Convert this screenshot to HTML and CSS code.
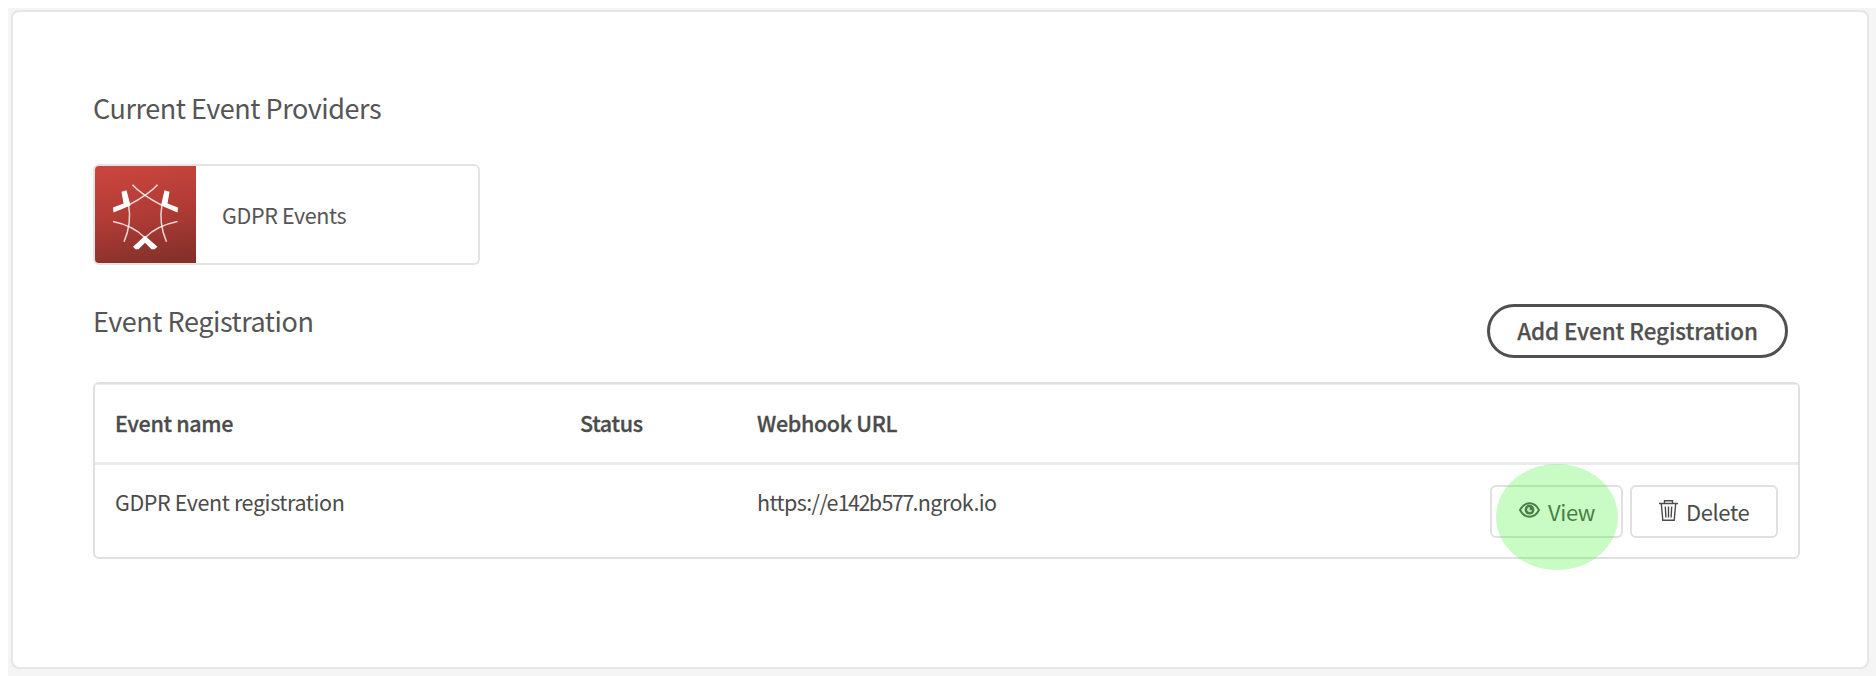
FILE: index.html
```html
<!DOCTYPE html>
<html lang="en">
<head>
<meta charset="utf-8">
<title>Event Providers</title>
<link rel="stylesheet" href="styles.css">
</head>
<body>
<main class="page">
  <section class="panel">
    <h2 class="heading heading-providers">Current Event Providers</h2>
    <div class="provider">
      <svg class="provider-logo" viewBox="0 0 101 96" preserveAspectRatio="none">
        <defs>
          <linearGradient id="red" x1="0.4" y1="0" x2="0.6" y2="1">
            <stop offset="0" stop-color="#c8453d"/>
            <stop offset="0.5" stop-color="#b03b35"/>
            <stop offset="1" stop-color="#85302b"/>
          </linearGradient>
        </defs>
        <rect width="101" height="96" fill="url(#red)"/>
        <g fill="none" stroke="#fff" stroke-opacity="0.8" stroke-width="1.5">
          <path d="M37.500 18.500Q46 28 67 39"/>
          <path d="M62.500 18.500Q54 28 33 39"/>
          <path d="M33.500 38Q37 57 29 75"/>
          <path d="M67 38Q63.500 57 71.500 75"/>
          <path d="M18 55Q38 59 50 71"/>
          <path d="M82.500 55Q62 59 50 71"/>
        </g>
        <g fill="#fff">
          <path d="M26.500 25.500L31.500 24L35.500 39L18.500 46L18 41L28.500 37Z"/>
          <path d="M74.500 25.500L69.500 24L66 39L82.500 46L83 41L72.500 37Z"/>
          <path d="M50 69L62.500 80L59.500 82.500H56.500L50 76L43.500 82.500H40.500L38 80Z"/>
        </g>
      </svg>
      <span class="provider-name">GDPR Events</span>
    </div>
    <div class="section-bar">
      <h2 class="heading heading-registration">Event Registration</h2>
      <button class="add-button">Add Event Registration</button>
    </div>
    <div class="table">
      <div class="row row-head">
        <span>Event name</span>
        <span>Status</span>
        <span>Webhook URL</span>
      </div>
      <div class="row row-body">
        <span>GDPR Event registration</span>
        <span></span>
        <span class="url">https://e<span class="digits">142</span>b<span class="digits">577</span>.ngrok.io</span>
        <div class="actions">
          <button class="action view">
            <svg class="eye" viewBox="0 0 21 16"><path fill="none" stroke="#4b4b4b" stroke-width="1.900" d="M1 8Q4.500 1.300 10.500 1.300Q16.500 1.300 20 8Q16.500 14.700 10.500 14.700Q4.500 14.700 1 8Z"/><circle cx="10.500" cy="7.700" r="4.900" fill="#4b4b4b"/><path d="M10.800 5A2.600 2.600 0 1 0 13.200 8.200L10.800 8Z" fill="#fff" fill-opacity="0.85"/></svg>
            <span>View</span>
            <span class="highlight"></span>
          </button>
          <button class="action delete">
            <svg class="trash" viewBox="0 0 19 21" fill="none" stroke="#4b4b4b" stroke-width="1.400"><path d="M0 3.500H19M5.500 3V.8H13.500V3M2.300 3.500L3.800 20.200H15.200L16.700 3.500M6.300 6.500L6.900 17.500M9.500 6.500V17.500M12.700 6.500L12.100 17.500"/></svg>
            <span>Delete</span>
          </button>
        </div>
      </div>
    </div>
  </section>
</main>
</body>
</html>
```
FILE: styles.css
```css
* { box-sizing: border-box; }
body { margin: 0; background: #fff; color: #4b4b4b; font-family: "Noto Sans CJK SC", "Noto Sans", sans-serif; }
.page { display: flex; width: 1876px; height: 676px; padding: 8px 0 0 8px; background: #f5f5f5 content-box; }
.panel { width: 1858px; height: 659px; margin: 2px 0 0 3px; padding: 79px 67px 0 80px; border: 2px solid #e6e6e6; border-radius: 8px; background: #fff; }
.heading { margin: 0; font-weight: 400; font-size: 27px; line-height: 34px; color: #555; white-space: nowrap; }
.heading-providers { letter-spacing: -0.45px; }
.heading-registration { letter-spacing: -0.45px; }
.provider { display: flex; align-items: center; width: 387px; height: 101px; margin-top: 39px; border: 2px solid #e4e4e4; border-radius: 6px; overflow: hidden; }
.provider-logo { width: 101px; height: 97px; }
.provider-name { margin-left: 26px; font-size: 21.5px; line-height: 28px; letter-spacing: -0.35px; color: #555; }
.section-bar { display: flex; justify-content: space-between; height: 80px; padding: 39px 12px 0 0; }
.add-button { width: 301px; height: 54px; padding: 0 0 2px; border: 3px solid #505050; border-radius: 27px; background: #fff; color: #505050; font: 500 22.4px/30px "Noto Sans CJK SC", sans-serif; letter-spacing: -0.08px; -webkit-text-stroke: 0.25px #505050; }
.table { height: 177px; margin-top: 37px; margin-bottom: 0; border: 2px solid #e0e0e0; border-radius: 6px; }
.row { display: grid; grid-template-columns: 465px 177px 500px 1fr; padding-left: 20px; font-size: 21.5px; line-height: 28px; }
.row-head { height: 81px; padding-top: 25px; font-weight: 500; letter-spacing: -0.33px; border-bottom: 3px solid #eaebed; box-shadow: inset 0 1px #ededed; -webkit-text-stroke: 0.3px #4b4b4b; }
.row-body { padding-top: 23px; letter-spacing: -0.39px; }
.url { letter-spacing: -0.6px; }
.digits { letter-spacing: -1.6px; }
.actions { display: flex; justify-content: flex-end; gap: 7px; padding-right: 20px; margin-top: -3px; }
.action { position: relative; display: flex; align-items: center; height: 53px; padding: 0 0 2px 27px; border: 2px solid #e0e0e0; border-radius: 6px; background: #fff; color: #4b4b4b; font: 400 22px/28px "Noto Sans CJK SC", sans-serif; letter-spacing: -0.4px; gap: 8px; }
.view { width: 133px; }
.delete { width: 148px; gap: 8px; }
.eye { width: 21px; height: 16px; margin-bottom: 2px; }
.trash { width: 19px; height: 21px; margin-bottom: 1px; }
.highlight { position: absolute; left: 4px; top: -23px; width: 122px; height: 106px; border-radius: 50%; background: rgba(72, 245, 58, 0.3); }
```
